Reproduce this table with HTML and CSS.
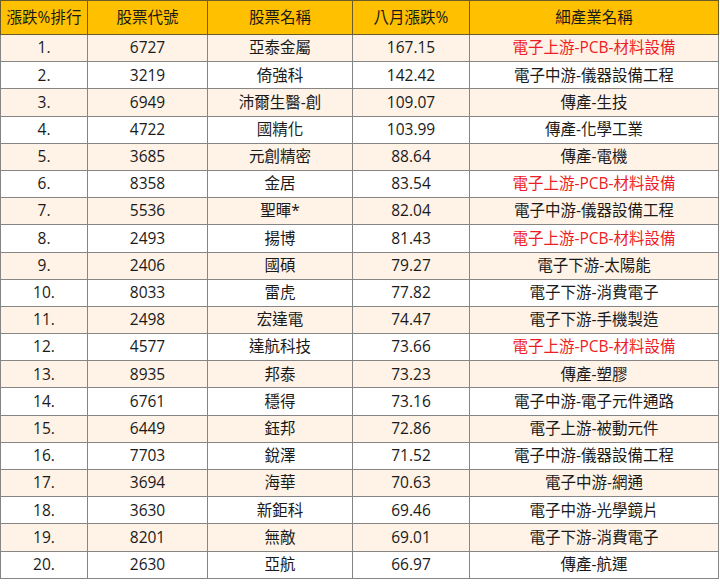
FILE: index.html
```html
<!DOCTYPE html>
<html lang="zh-Hant">
<head>
<meta charset="utf-8">
<link rel="stylesheet" href="styles.css">
</head>
<body>
<table class="rank">
  <colgroup>
    <col class="c1"><col class="c2"><col class="c3"><col class="c4"><col class="c5">
  </colgroup>
  <thead>
    <tr><th>漲跌%排行</th><th>股票代號</th><th>股票名稱</th><th>八月漲跌%</th><th>細產業名稱</th></tr>
  </thead>
  <tbody>
    <tr><td>1.</td><td>6727</td><td>亞泰金屬</td><td>167.15</td><td class="hot">電子上游-PCB-材料設備</td></tr>
    <tr><td>2.</td><td>3219</td><td>倚強科</td><td>142.42</td><td>電子中游-儀器設備工程</td></tr>
    <tr><td>3.</td><td>6949</td><td>沛爾生醫-創</td><td>109.07</td><td>傳產-生技</td></tr>
    <tr><td>4.</td><td>4722</td><td>國精化</td><td>103.99</td><td>傳產-化學工業</td></tr>
    <tr><td>5.</td><td>3685</td><td>元創精密</td><td>88.64</td><td>傳產-電機</td></tr>
    <tr><td>6.</td><td>8358</td><td>金居</td><td>83.54</td><td class="hot">電子上游-PCB-材料設備</td></tr>
    <tr><td>7.</td><td>5536</td><td>聖暉*</td><td>82.04</td><td>電子中游-儀器設備工程</td></tr>
    <tr><td>8.</td><td>2493</td><td>揚博</td><td>81.43</td><td class="hot">電子上游-PCB-材料設備</td></tr>
    <tr><td>9.</td><td>2406</td><td>國碩</td><td>79.27</td><td>電子下游-太陽能</td></tr>
    <tr><td>10.</td><td>8033</td><td>雷虎</td><td>77.82</td><td>電子下游-消費電子</td></tr>
    <tr><td>11.</td><td>2498</td><td>宏達電</td><td>74.47</td><td>電子下游-手機製造</td></tr>
    <tr><td>12.</td><td>4577</td><td>達航科技</td><td>73.66</td><td class="hot">電子上游-PCB-材料設備</td></tr>
    <tr><td>13.</td><td>8935</td><td>邦泰</td><td>73.23</td><td>傳產-塑膠</td></tr>
    <tr><td>14.</td><td>6761</td><td>穩得</td><td>73.16</td><td>電子中游-電子元件通路</td></tr>
    <tr><td>15.</td><td>6449</td><td>鈺邦</td><td>72.86</td><td>電子上游-被動元件</td></tr>
    <tr><td>16.</td><td>7703</td><td>銳澤</td><td>71.52</td><td>電子中游-儀器設備工程</td></tr>
    <tr><td>17.</td><td>3694</td><td>海華</td><td>70.63</td><td>電子中游-網通</td></tr>
    <tr><td>18.</td><td>3630</td><td>新鉅科</td><td>69.46</td><td>電子中游-光學鏡片</td></tr>
    <tr><td>19.</td><td>8201</td><td>無敵</td><td>69.01</td><td>電子下游-消費電子</td></tr>
    <tr><td>20.</td><td>2630</td><td>亞航</td><td>66.97</td><td>傳產-航運</td></tr>
  </tbody>
</table>
</body>
</html>
```
FILE: styles.css
```css
html, body {
  margin: 0;
  padding: 0;
  background: #ffffff;
}
body {
  font-family: "Open Sans", "Noto Sans CJK TC", sans-serif;
  color: #1a1a1a;
}
.rank {
  border-collapse: collapse;
  table-layout: fixed;
  width: 718px;
  font-size: 15.5px;
}
.c1 { width: 87px; }
.c2 { width: 120px; }
.c3 { width: 145px; }
.c4 { width: 117px; }
.c5 { width: 249px; }
.rank th, .rank td {
  border: 1px solid #858585;
  text-align: center;
  padding: 0;
  line-height: 1;
  white-space: nowrap;
}
.rank th {
  background: #ffc000;
  font-weight: normal;
  height: 33px;
  color: #1a1a1a;
  border-color: #6b5a2a;
}
.rank td {
  height: 26.2px;
}
.rank tbody tr:nth-child(odd) td {
  background: #fff2e6;
}
.rank td.hot {
  color: #ee1c25;
}
```
